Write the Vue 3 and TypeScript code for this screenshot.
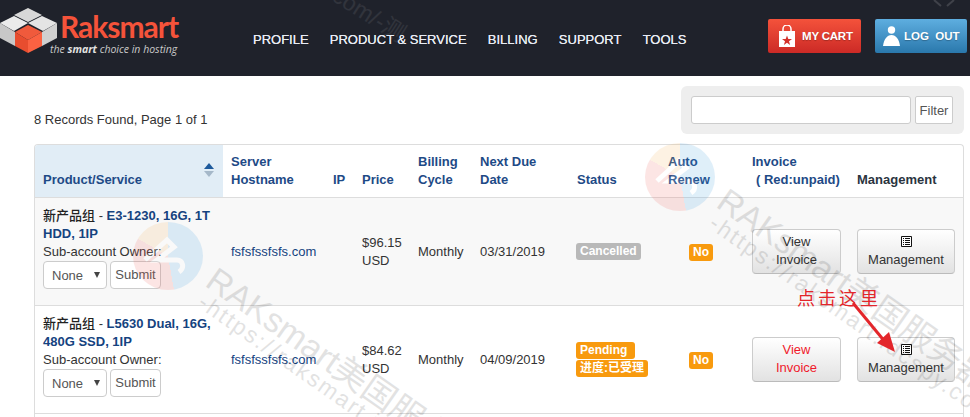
<script setup lang="ts">
interface Row {
  name: string
  spec: string
  price: string
  date: string
  status: string[]
  unpaid: boolean
  shade: boolean
}
const cols: number[] = [188, 102, 29, 56, 62, 97, 91, 84, 105, 116]
const rows: Row[] = [
  { name: '新产品组', spec: 'E3-1230, 16G, 1T HDD, 1IP', price: '$96.15 USD', date: '03/31/2019', status: ['Cancelled'], unpaid: false, shade: true },
  { name: '新产品组', spec: 'L5630 Dual, 16G, 480G SSD, 1IP', price: '$84.62 USD', date: '04/09/2019', status: ['Pending', '进度:已受理'], unpaid: true, shade: false }
]
const marks = [
  { x: 733, y: 180 },
  { x: 222, y: 259 }
]
const discs = [
  { x: 645, y: 143 },
  { x: 133, y: 222 }
]
</script>

<template>
  <div class="page">
    <header class="top">
      <div class="logo">
        <svg class="cubes" width="58" height="56" viewBox="0 0 58 56">
          <path d="M14 15 28 8 42 15 28 22Z" fill="#d8d8d8" />
          <path d="M0 23 14 16 28 23 14 31Z" fill="#ebebeb" />
          <path d="M28 23 42 16 57 23 43 31Z" fill="#e4e4e4" />
          <path d="M0 23 15 32V46L0 38Z" fill="#c8c8c8" />
          <path d="M57 23V38L42 46V32Z" fill="#d0d0d0" />
          <path d="M15 32 28 25 42 32 28 40Z" fill="#f05a3c" />
          <path d="M15 32 28 40V53L15 46Z" fill="#e84d2f" />
          <path d="M42 32V46L28 53V40Z" fill="#fb6242" />
        </svg>
        <div class="brand">
          <div class="brand-name">Raksmart</div>
          <div class="tagline">the <b>smart</b> choice in hosting</div>
        </div>
      </div>
      <nav class="nav">
        <a>PROFILE</a><a>PRODUCT &amp; SERVICE</a><a>BILLING</a><a>SUPPORT</a><a>TOOLS</a>
      </nav>
      <div class="actions">
        <button class="act cart">
          <svg width="18" height="23" viewBox="0 0 18 23">
            <path d="M5 7V4a4 4 0 0 1 8 0v3" fill="none" stroke="#fff" stroke-width="1.5" />
            <path d="M1 6H17V22H1Z" fill="#fff" />
            <path d="M9 10.500 10.300 14H14L11 16.200 12.100 20 9 17.700 5.900 20 7 16.200 4 14H7.700Z" fill="#d3312a" />
          </svg>
          <span>MY CART</span>
        </button>
        <button class="act out">
          <svg width="17" height="21" viewBox="0 0 17 21">
            <circle cx="8.500" cy="4" r="3.700" fill="#fff" />
            <path d="M0 20C1 13 4 9 8.500 9S16 13 17 20Z" fill="#fff" />
          </svg>
          <span>LOG&nbsp; OUT</span>
        </button>
      </div>
    </header>

    <main class="main">
      <div class="tools">
        <div class="records">8 Records Found, Page 1 of 1</div>
        <div class="search">
          <input class="search-box" type="text" />
          <button class="filter">Filter</button>
        </div>
      </div>

      <div class="card">
        <table class="tbl">
          <colgroup>
            <col v-for="(w, i) in cols" :key="i" :style="{ width: w + 'px' }" />
          </colgroup>
          <thead>
            <tr>
              <th class="sorted">
                Product/Service
                <span class="sort"><i class="up"></i><i class="down"></i></span>
              </th>
              <th>Server<br />Hostname</th>
              <th>IP</th>
              <th>Price</th>
              <th>Billing<br />Cycle</th>
              <th>Next Due<br />Date</th>
              <th>Status</th>
              <th>Auto<br />Renew</th>
              <th>Invoice<br /><span class="ind">( Red:unpaid)</span></th>
              <th class="dark">Management</th>
            </tr>
          </thead>
          <tbody>
            <tr v-for="(r, i) in rows" :key="i" :class="{ shade: r.shade }">
              <td class="prod">
                <div class="pname"><span class="zh">{{ r.name }}</span> - <a>{{ r.spec }}</a></div>
                <div>Sub-account Owner:</div>
                <div class="owner">
                  <span class="sel">None<i></i></span>
                  <button class="sub">Submit</button>
                </div>
              </td>
              <td><a class="host">fsfsfssfsfs.com</a></td>
              <td></td>
              <td>{{ r.price }}</td>
              <td>Monthly</td>
              <td>{{ r.date }}</td>
              <td>
                <div v-for="s in r.status" :key="s" class="lab" :class="s === 'Cancelled' ? 'grey' : 'orange'">
                  <span :class="{ wide: s === 'Pending' }">{{ s }}</span>
                </div>
              </td>
              <td class="renew"><span class="lab-no">No</span></td>
              <td><button class="btn inv" :class="{ red: r.unpaid }">View<br />Invoice</button></td>
              <td>
                <button class="btn mgmt">
                  <svg class="ic" width="11" height="11" viewBox="0 0 11 11">
                    <path d="M.5.500H10.500V10.500H.5Z" fill="#fff" stroke="#111" />
                    <path d="M2 2.500H3M4 2.500H9M2 4.500H3M4 4.500H9M2 6.500H3M4 6.500H9M2 8.500H3M4 8.500H9" stroke="#111" />
                  </svg>
                  <br />Management
                </button>
              </td>
            </tr>
            <tr class="tail"><td colspan="10"></td></tr>
          </tbody>
        </table>
      </div>
    </main>

    <div class="marks" aria-hidden="true">
      <div v-for="(d, i) in discs" :key="'d' + i" class="disc" :style="{ left: d.x + 'px', top: d.y + 'px' }">
        <svg width="70" height="68" viewBox="0 0 70 68">
          <path d="M12 38 34 18 41 25 24 38H44C50 38 52 46 46 50" fill="none" stroke="#fff" stroke-width="5" />
        </svg>
      </div>
      <div v-for="(m, i) in marks" :key="i" class="mark" :style="{ left: m.x + 'px', top: m.y + 'px' }">
        <div class="m1">RAKsmart美国服务器</div>
        <div class="m2">-https://raksmart.idcspy.com</div>
      </div>
      <div class="mark-top">com/-测</div>
      <svg class="mark-corner" width="24" height="7" viewBox="0 0 24 7">
        <path d="M2 0 9 6M22 0 15 6" stroke="#fff" stroke-width="2" fill="none" />
      </svg>
    </div>

    <div class="note">
      <span class="note-text">点击这里</span>
      <svg class="arrow" width="60" height="60" viewBox="0 0 60 60">
        <path d="M9 7 42 47" stroke="#e3262b" stroke-width="3" fill="none" />
        <path d="M51 56 33 47 45 36Z" fill="#e3262b" />
      </svg>
    </div>
  </div>
</template>

<style>
html,
body {
  margin: 0;
  background: #fff;
}
</style>

<style scoped>
.page {
  position: relative;
  width: 970px;
  height: 417px;
  overflow: hidden;
  font-family: "Liberation Sans", Arial, sans-serif;
  font-size: 13px;
  line-height: 18px;
  color: #333;
}
.top {
  height: 76px;
  background: #1f222b;
  display: flex;
  align-items: flex-start;
}
.logo {
  width: 253px;
  display: flex;
  flex: none;
}
.cubes {
  flex: none;
  margin-right: 2px;
}
.brand {
  margin-top: 11px;
}
.brand-name {
  font-family: "Lato", sans-serif;
  font-weight: 700;
  font-size: 30px;
  line-height: 31px;
  color: #f5533a;
  letter-spacing: -1px;
}
.tagline {
  font-family: "Open Sans", sans-serif;
  font-style: italic;
  font-size: 10.500px;
  line-height: 14px;
  margin: 0 0 0 -10px;
  color: #c9c9c9;
  white-space: nowrap;
}
.tagline b {
  font-weight: 700;
  color: #e2e2e2;
}
.nav {
  display: flex;
  gap: 21.200px;
  padding-top: 31px;
  font-size: 13px;
  white-space: nowrap;
}
.nav a {
  color: #e8ecf4;
  text-shadow: 0 0 .6px #e8ecf4;
}
.actions {
  margin-left: auto;
  display: flex;
  gap: 14px;
  padding: 19px 3px 0 0;
}
.act {
  height: 34px;
  border: 0;
  border-radius: 2px;
  color: #fff;
  font: 700 11.500px "Liberation Sans", Arial, sans-serif;
  display: flex;
  align-items: center;
  padding: 0;
  text-shadow: 0 1px 1px rgba(0, 0, 0, .25);
}
.cart {
  width: 93px;
  padding-left: 10px;
  gap: 6px;
  background: linear-gradient(#f4523b, #cc2a26);
  letter-spacing: -.2px;
}
.out {
  width: 92px;
  padding-left: 8px;
  gap: 4px;
  background: linear-gradient(#5eaee0, #2a78ac);
}
.main {
  padding: 10px 6px 0 34px;
}
.tools {
  display: flex;
  justify-content: space-between;
  align-items: flex-end;
  height: 48px;
}
.records {
  line-height: 18px;
  padding-bottom: 5px;
}
.search {
  width: 283px;
  height: 48px;
  box-sizing: border-box;
  padding: 10px 11px 0 10px;
  background: #eee;
  border-radius: 6px;
  display: flex;
  gap: 4px;
}
.search-box {
  width: 220px;
  height: 28px;
  box-sizing: border-box;
  border: 1px solid #ccc;
  border-radius: 3px;
  background: #fff;
  padding: 0;
  margin: 0;
}
.filter {
  width: 38px;
  height: 28px;
  box-sizing: border-box;
  border: 1px solid #ccc;
  border-radius: 2px;
  background: #fff;
  color: #555;
  padding: 0;
  font: 13px "Liberation Sans", Arial, sans-serif;
}
.card {
  margin-top: 10px;
  border: 1px solid #ddd;
  border-bottom: 0;
  border-radius: 4px 4px 0 0;
  overflow: hidden;
  width: 930px;
  box-sizing: border-box;
}
.tbl {
  border-collapse: separate;
  border-spacing: 0;
  table-layout: fixed;
  width: 930px;
}
th {
  height: 53px;
  padding: 0 0 8px 8px;
  box-sizing: border-box;
  text-align: left;
  vertical-align: bottom;
  color: #1e4a86;
  font-weight: 700;
  font-size: 13px;
  line-height: 18px;
  border-bottom: 1px solid #ddd;
  white-space: nowrap;
}
th.dark {
  color: #2a3440;
}
th.sorted {
  position: relative;
  background: #e1edf6;
}
.ind {
  padding-left: 4px;
}
.sort {
  position: absolute;
  right: 9px;
  top: 18px;
  width: 10px;
}
.sort i {
  display: block;
  width: 0;
  height: 0;
  border-left: 5.500px solid transparent;
  border-right: 5.500px solid transparent;
}
.up {
  border-bottom: 6px solid #1e5a9c;
  margin-bottom: 2px;
}
.down {
  border-top: 6px solid #a5b8c9;
}
td {
  height: 108px;
  box-sizing: border-box;
  padding: 0 0 0 8px;
  border-bottom: 1px solid #ddd;
  vertical-align: middle;
  font-size: 13px;
  line-height: 18px;
  color: #333;
}
.shade td {
  background: #f8f8f8;
}
.tail td {
  height: 4px;
  border: 0;
}
td a {
  color: #15437f;
}
td.prod {
  vertical-align: top;
  padding: 8px 4px 0 8px;
}
.pname a {
  font-weight: 700;
}
.zh {
  font-family: "Noto Sans CJK SC", sans-serif;
  font-weight: 500;
  color: #222;
}
.pname {
  line-height: 18px;
}
.owner {
  display: flex;
  gap: 3px;
}
.sel {
  position: relative;
  width: 64px;
  height: 28px;
  box-sizing: border-box;
  border: 1px solid #ccc;
  border-radius: 4px;
  background: #fff;
  color: #555;
  padding: 5px 0 0 8px;
}
.sel i {
  position: absolute;
  right: 6px;
  top: 10px;
  border-left: 3.500px solid transparent;
  border-right: 3.500px solid transparent;
  border-top: 6px solid #444;
}
.sub {
  width: 51px;
  height: 28px;
  box-sizing: border-box;
  padding: 0 0 2px;
  border: 1px solid #ccc;
  border-radius: 4px;
  background: #fff;
  color: #555;
  font: 13px "Liberation Sans", Arial, sans-serif;
}
.lab {
  line-height: 0;
  margin-left: -1px;
}
.lab span {
  display: inline-block;
  font: 700 12px/17px "Liberation Sans", "Noto Sans CJK SC", sans-serif;
  color: #fff;
  padding: 0 4px;
  border-radius: 3px;
}
.lab span.wide {
  padding-right: 8px;
}
.lab + .lab {
  margin-top: 1px;
}
.grey span {
  background: #b9b9b9;
}
.orange span {
  background: #f89a0e;
}
.renew {
  padding-left: 29px;
}
.lab-no {
  display: inline-block;
  font: 700 12px/17px "Liberation Sans", sans-serif;
  color: #fff;
  background: #f89a0e;
  padding: 0 4px;
  border-radius: 3px;
}
.btn {
  display: block;
  height: 45px;
  box-sizing: border-box;
  padding: 0;
  margin-top: -1px;
  border: 1px solid #ccc;
  border-bottom-color: #bbb;
  border-radius: 4px;
  background: linear-gradient(#fff, #e2e2e2);
  color: #333;
  font: 13px/18px "Liberation Sans", Arial, sans-serif;
  text-align: center;
}
.inv {
  width: 89px;
}
.red {
  color: #f01a2c;
}
.mgmt {
  width: 98px;
}
.ic {
  vertical-align: -1px;
}
.marks {
  position: absolute;
  inset: 0;
  pointer-events: none;
  overflow: hidden;
}
.disc {
  position: absolute;
  width: 70px;
  height: 68px;
  border-radius: 50%;
  opacity: .16;
  background: conic-gradient(#3f9ee0 0 170deg, #f0635c 170deg 300deg, #f5b45a 300deg 360deg);
}
.disc svg {
  display: block;
}
.mark {
  position: absolute;
  width: 460px;
  transform: rotate(35deg);
  transform-origin: 0 0;
  color: #000;
  opacity: .11;
  white-space: nowrap;
}
.m1 {
  font-family: "Liberation Sans", "Noto Sans CJK SC", sans-serif;
  font-size: 34px;
  line-height: 40px;
}
.m2 {
  font-size: 23px;
  line-height: 26px;
  letter-spacing: 2px;
  margin: -8px 0 0 6px;
}
.mark-top {
  position: absolute;
  left: 342px;
  top: -18px;
  transform: rotate(32deg);
  transform-origin: 0 0;
  font-family: "Liberation Sans", "Noto Sans CJK SC", sans-serif;
  font-size: 23px;
  line-height: 26px;
  color: #fff;
  opacity: .08;
  white-space: nowrap;
}
.mark-corner {
  position: absolute;
  left: 932px;
  top: 0;
  opacity: .14;
}
.note {
  position: absolute;
  left: 797px;
  top: 286px;
}
.note-text {
  display: block;
  font-family: "Noto Sans CJK SC", sans-serif;
  font-size: 18px;
  line-height: 22px;
  letter-spacing: 3px;
  color: #e3262b;
  white-space: nowrap;
}
.arrow {
  position: absolute;
  left: 47px;
  top: 10px;
}
</style>
